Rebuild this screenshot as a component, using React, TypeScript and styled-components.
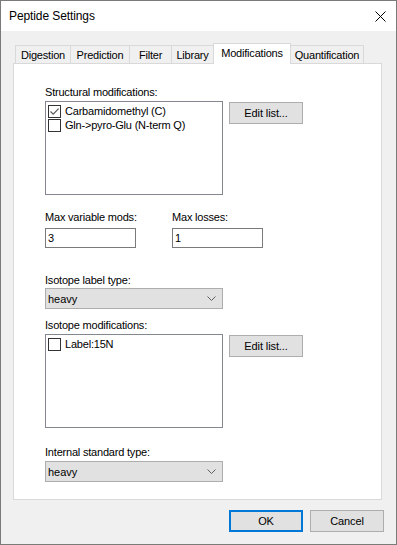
import React from "react";
import styled, { createGlobalStyle } from "styled-components";

const Global = createGlobalStyle`
  html, body { margin: 0; padding: 0; background: #ffffff; }
  body { font-family: "Liberation Sans", Arial, sans-serif; color: #000; }
  * { box-sizing: border-box; }
`;

const Window = styled.div`
  width: 397px;
  height: 545px;
  border: 1px solid #7a7a7a;
  background: #f0f0f0;
  display: flex;
  flex-direction: column;
`;

const TitleBar = styled.div`
  height: 30px;
  flex: none;
  background: #ffffff;
  display: flex;
  align-items: center;
  justify-content: space-between;
  padding: 0 10px 0 8px;
`;

const Title = styled.span`
  font-size: 12px;
  letter-spacing: -0.1px;
`;

const Body = styled.div`
  padding: 12px 14px 0 12px;
  display: flex;
  flex-direction: column;
`;

const TabRow = styled.div`
  display: flex;
  align-items: flex-end;
  height: 21px;
  margin-left: 2px;
  margin-bottom: -1px;
  position: relative;
  z-index: 1;
`;

const Tab = styled.div<{ $w: number; $active?: boolean }>`
  width: ${(p) => p.$w}px;
  height: ${(p) => (p.$active ? 21 : 18)}px;
  margin-bottom: ${(p) => (p.$active ? 0 : 1)}px;
  margin-left: -1px;
  &:first-child { margin-left: 0; }
  border: 1px solid #d9d9d9;
  border-bottom: none;
  background: ${(p) => (p.$active ? "#ffffff" : "#f0f0f0")};
  position: relative;
  z-index: ${(p) => (p.$active ? 2 : 1)};
  display: flex;
  align-items: center;
  justify-content: center;
  font-size: 11px;
  letter-spacing: -0.2px;
  padding-bottom: ${(p) => (p.$active ? 2 : 0)}px;
`;

const Panel = styled.div`
  height: 437px;
  background: #ffffff;
  border: 1px solid #d9d9d9;
  padding: 22px 0 0 31px;
  display: flex;
  flex-direction: column;
`;

const Section = styled.div<{ $mt?: number }>`
  margin-top: ${(p) => p.$mt ?? 0}px;
  display: flex;
  flex-direction: column;
`;

const Label = styled.div<{ $gap: number }>`
  height: 13px;
  line-height: 13px;
  font-size: 11px;
  letter-spacing: -0.2px;
  margin-bottom: ${(p) => p.$gap}px;
  white-space: nowrap;
`;

const ListRow = styled.div`
  display: flex;
  align-items: flex-start;
`;

const CheckList = styled.div`
  width: 178px;
  height: 94px;
  border: 1px solid #828790;
  background: #ffffff;
  padding: 3px 2px;
  display: flex;
  flex-direction: column;
`;

const Item = styled.div`
  height: 14px;
  display: flex;
  align-items: flex-start;
  font-size: 11px;
  letter-spacing: -0.2px;
  line-height: 13px;
  white-space: nowrap;
`;

const Box = styled.span`
  width: 13px;
  height: 13px;
  flex: none;
  border: 1px solid #333333;
  background: #ffffff;
  margin-right: 4px;
  display: flex;
  align-items: center;
  justify-content: center;
`;

const Button = styled.div<{ $default?: boolean }>`
  width: 74px;
  height: 22px;
  flex: none;
  background: #e1e1e1;
  border: ${(p) => (p.$default ? "2px solid #0078d7" : "1px solid #adadad")};
  display: flex;
  align-items: center;
  justify-content: center;
  font-size: 11px;
  letter-spacing: -0.1px;
`;

const SideButton = styled(Button)`
  margin-left: 6px;
  margin-top: 1px;
`;

const FieldRow = styled.div`
  display: flex;
`;

const Field = styled.div`
  width: 127px;
  display: flex;
  flex-direction: column;
`;

const TextBox = styled.div`
  width: 91px;
  height: 20px;
  border: 1px solid #7a7a7a;
  background: #ffffff;
  padding-left: 2px;
  display: flex;
  align-items: center;
  font-size: 11px;
`;

const Combo = styled.div`
  width: 178px;
  height: 21px;
  background: #e1e1e1;
  border: 1px solid #adadad;
  padding: 0 6px 0 2px;
  display: flex;
  align-items: center;
  justify-content: space-between;
  font-size: 11px;
`;

const Footer = styled.div`
  display: flex;
  justify-content: flex-end;
  gap: 7px;
  margin-top: 10px;
  padding-right: 12px;
`;

const CloseIcon = () => (
  <svg width="11" height="11" viewBox="0 0 11 11">
    <path d="M0.5 0.5 L10.5 10.5 M10.5 0.5 L0.5 10.5" stroke="#000" strokeWidth="1" />
  </svg>
);

const CheckMark = () => (
  <svg width="11" height="11" viewBox="0 0 11 11">
    <path d="M1.5 5.5 L4.2 8.2 L9.6 2.6" fill="none" stroke="#5a5a5a" strokeWidth="1.2" />
  </svg>
);

const Chevron = () => (
  <svg width="9" height="5" viewBox="0 0 9 5">
    <path d="M0.5 0.5 L4.5 4.5 L8.5 0.5" fill="none" stroke="#606060" strokeWidth="1" />
  </svg>
);

const tabs = [
  { name: "Digestion", w: 56 },
  { name: "Prediction", w: 60 },
  { name: "Filter", w: 43 },
  { name: "Library", w: 43 },
  { name: "Modifications", w: 78, active: true },
  { name: "Quantification", w: 74 },
];

const CheckItem = ({ label, checked }: { label: string; checked?: boolean }) => (
  <Item>
    <Box>{checked && <CheckMark />}</Box>
    {label}
  </Item>
);

export default function App() {
  return (
    <>
      <Global />
      <Window>
        <TitleBar>
          <Title>Peptide Settings</Title>
          <CloseIcon />
        </TitleBar>
        <Body>
          <TabRow>
            {tabs.map((t) => (
              <Tab key={t.name} $w={t.w} $active={t.active}>
                {t.name}
              </Tab>
            ))}
          </TabRow>
          <Panel>
            <Section>
              <Label $gap={2}>Structural modifications:</Label>
              <ListRow>
                <CheckList>
                  <CheckItem label="Carbamidomethyl (C)" checked />
                  <CheckItem label="Gln->pyro-Glu (N-term Q)" />
                </CheckList>
                <SideButton>Edit list...</SideButton>
              </ListRow>
            </Section>
            <Section $mt={16}>
              <FieldRow>
                <Field>
                  <Label $gap={4}>Max variable mods:</Label>
                  <TextBox>3</TextBox>
                </Field>
                <Field>
                  <Label $gap={4}>Max losses:</Label>
                  <TextBox>1</TextBox>
                </Field>
              </FieldRow>
            </Section>
            <Section $mt={26}>
              <Label $gap={1}>Isotope label type:</Label>
              <Combo>
                heavy
                <Chevron />
              </Combo>
            </Section>
            <Section $mt={10}>
              <Label $gap={2}>Isotope modifications:</Label>
              <ListRow>
                <CheckList>
                  <CheckItem label="Label:15N" />
                </CheckList>
                <SideButton>Edit list...</SideButton>
              </ListRow>
            </Section>
            <Section $mt={18}>
              <Label $gap={2}>Internal standard type:</Label>
              <Combo>
                heavy
                <Chevron />
              </Combo>
            </Section>
          </Panel>
        </Body>
        <Footer>
          <Button $default>OK</Button>
          <Button>Cancel</Button>
        </Footer>
      </Window>
    </>
  );
}
